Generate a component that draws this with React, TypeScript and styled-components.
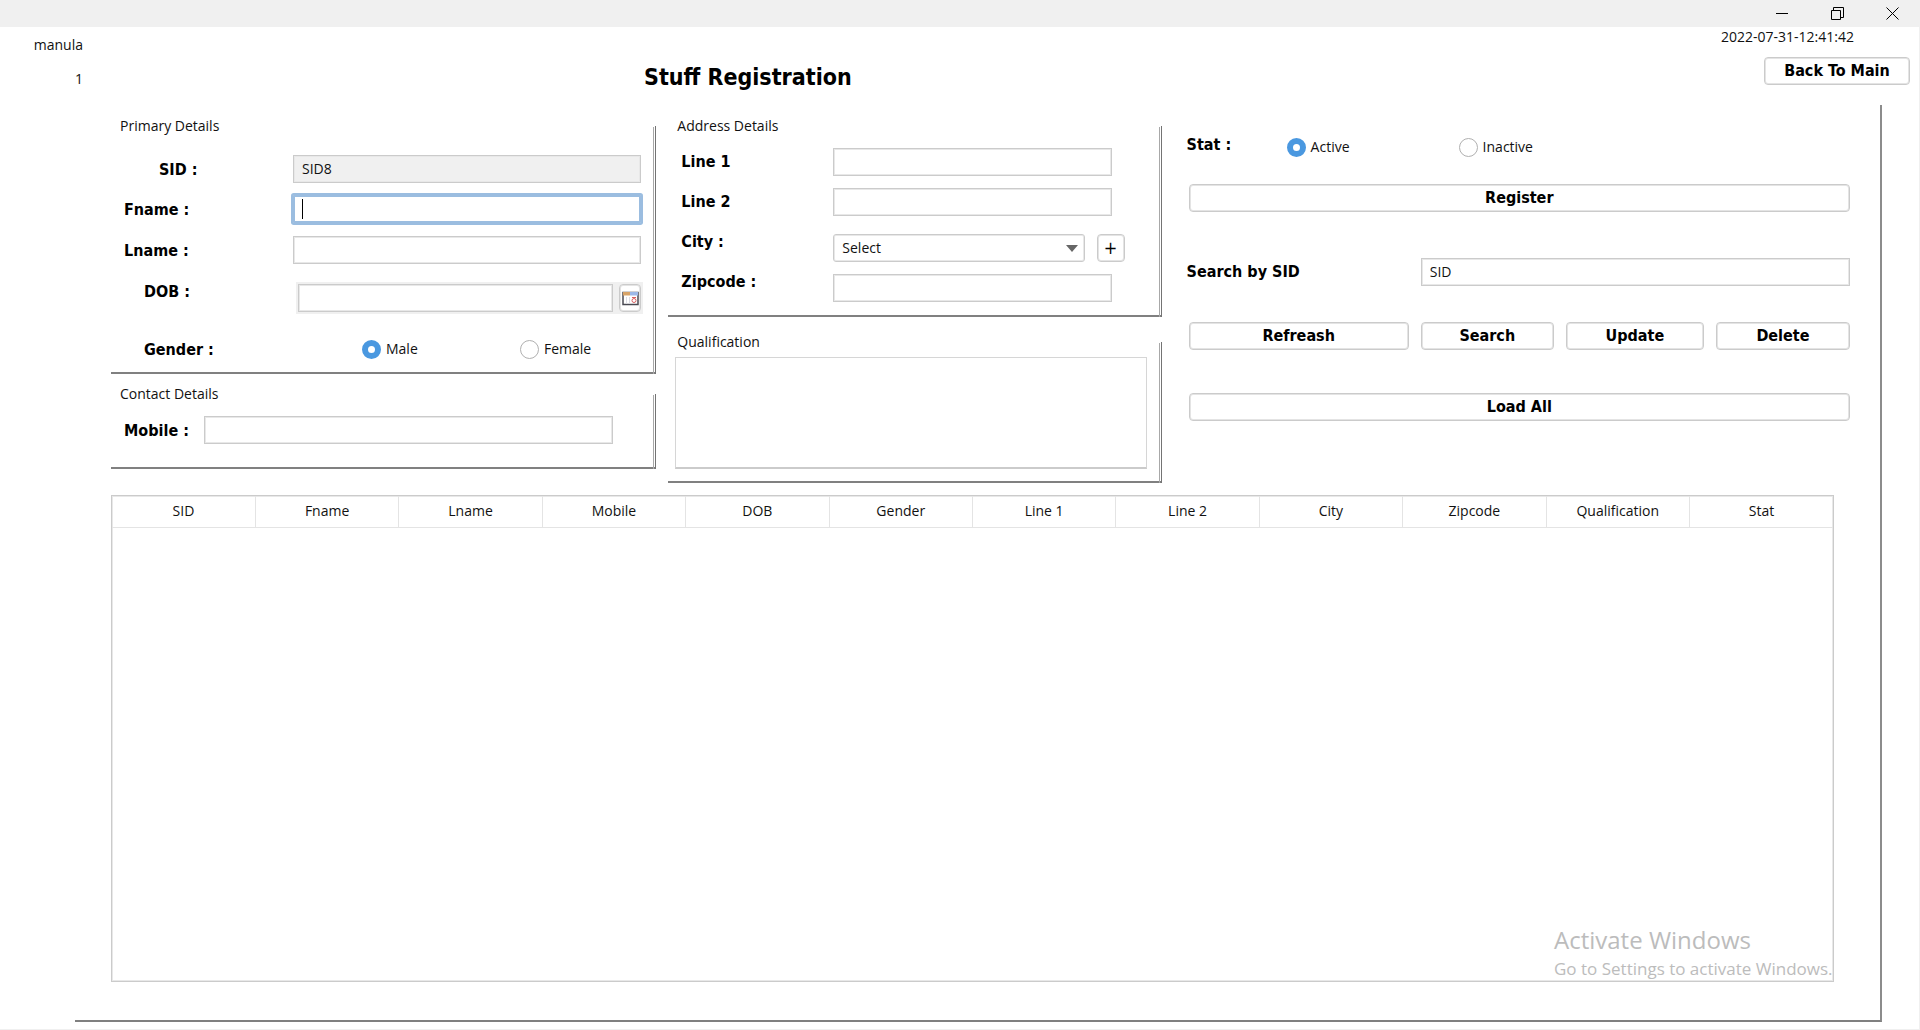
import React from "react";
import styled, { createGlobalStyle, css } from "styled-components";

const GlobalStyle = createGlobalStyle`
  *, *::before, *::after { box-sizing: border-box; }
  body {
    margin: 0;
    background: #fff;
    color: #111;
    font-family: "Open Sans", "Noto Sans", sans-serif;
    font-size: 14px;
    line-height: 20px;
  }
  button, input, select, textarea { font: inherit; color: inherit; }
`;

const boldFont = css`
  font-family: "DejaVu Sans Condensed", "DejaVu Sans", sans-serif;
  font-weight: 700;
  font-size: 16px;
  line-height: 20px;
  color: #000;
`;

const line = "#cbcbcb";

const Window = styled.div`
  position: relative;
  min-height: 100vh;
  display: flex;
  flex-direction: column;
  border-right: 1px solid #f0f0f0;
  border-bottom: 1px solid #f0f0f0;
`;

const TitleBar = styled.div`
  height: 27px;
  margin-right: -1px;
  background: #f0f0f0;
  display: flex;
  justify-content: flex-end;
`;

const WindowButton = styled.button`
  width: 55px;
  border: 0;
  padding: 0;
  background: transparent;
  display: grid;
  place-items: center;
  svg { width: 13px; height: 13px; fill: none; stroke: #000; }
`;

const Header = styled.header`
  display: grid;
  grid-template-columns: 83px 1fr 1fr;
  height: 78px;
`;

const User = styled.div`
  display: flex;
  flex-direction: column;
  align-items: flex-end;
  gap: 14px;
  padding-top: 8px;
`;

const Title = styled.h1`
  ${boldFont}
  font-size: 23px;
  line-height: 28px;
  margin: 36px 0 0;
  padding-left: 561px;
  white-space: nowrap;
`;

const HeaderRight = styled.div`
  display: flex;
  flex-direction: column;
  align-items: flex-end;
  gap: 10px;
  padding-right: 9px;
`;

const Clock = styled.time`
  padding-right: 56px;
`;

const Button = styled.button<{ $width?: number }>`
  ${boldFont}
  height: 28px;
  width: ${(p) => (p.$width ? `${p.$width}px` : "100%")};
  padding: 0;
  background: #fff;
  border: 1px solid ${line};
  box-shadow: inset 0 0 0 1px #e4e4e4;
  border-radius: 4px;
  white-space: nowrap;
`;

const PlusButton = styled(Button)`
  font-weight: 400;
  font-size: 18px;
`;

const Frame = styled.main`
  flex: 1;
  display: flex;
  flex-direction: column;
  margin: 0 37px 7px 75px;
  padding: 11px 46px 38px 36px;
  border-right: 2px solid #8c8c8c;
  border-bottom: 2px solid #808080;
`;

const Columns = styled.div`
  display: grid;
  grid-template-columns: 545fr 493fr 660fr;
  column-gap: 12px;
  height: 379px;
`;

const Column = styled.div`
  display: flex;
  flex-direction: column;
`;

const Group = styled.fieldset<{ $height: number; $gap?: number }>`
  margin: ${(p) => p.$gap ?? 0}px 0 0;
  padding: 0;
  border: 0;
  min-width: 0;
  height: ${(p) => p.$height}px;
  background:
    linear-gradient(#747474, #747474) right 0 top 0 / 1px 100% no-repeat,
    linear-gradient(#a8a8a8, #a8a8a8) right 2px top 1px / 1px 100% no-repeat,
    linear-gradient(#808080, #808080) left bottom / 100% 2px no-repeat;
`;

const Legend = styled.legend`
  padding: 0 0 0 9px;
  height: 20px;
`;

const Rows = styled.div<{ $top: number }>`
  padding: ${(p) => p.$top}px 15px 0 13px;
`;

const Row = styled.div<{ $height: number; $right?: number }>`
  display: flex;
  align-items: center;
  height: ${(p) => p.$height}px;
  padding-right: ${(p) => p.$right ?? 0}px;
`;

const RowLabel = styled.label<{ $indent?: number; $top?: boolean; $width?: number }>`
  ${boldFont}
  flex: none;
  width: ${(p) => p.$width ?? 169}px;
  padding: 2px 0 0 ${(p) => p.$indent ?? 0}px;
  ${(p) => p.$top && css`align-self: flex-start; line-height: 38px;`}
`;

const TextInput = styled.input<{ $active?: boolean }>`
  flex: 1;
  width: 100%;
  min-width: 0;
  height: 28px;
  padding: 0 8px 2px;
  border: 1px solid ${line};
  box-shadow: inset 0 0 0 1px #e8e8e8;
  border-radius: 0;
  background: #fff;
  outline: none;
  &:disabled { background: #f0f0f0; color: #111; }
  ${(p) =>
    p.$active &&
    css`
      border-color: #9bbde0;
      box-shadow: 0 0 0 2px #9bbde0, inset 0 0 0 1px #9bbde0;
      border-radius: 1px;
      background: linear-gradient(#000, #000) 8px center / 1px 20px no-repeat #fff;
    `}
`;

const DatePicker = styled.div`
  flex: 1;
  display: flex;
  gap: 6px;
  margin: 0 -2px 0 3px;
  padding: 2px;
  background: #f0f0f0;
`;

const CalendarButton = styled(Button)`
  flex: none;
  display: grid;
  place-items: center;
`;

const Choice = styled.label<{ $width: number }>`
  display: flex;
  align-items: center;
  gap: 5px;
  width: ${(p) => p.$width}px;
`;

const Radio = styled.input.attrs({ type: "radio" })`
  appearance: none;
  width: 19px;
  height: 19px;
  margin: 0;
  border: 1px solid #b0b0b0;
  border-radius: 50%;
  background: #fff;
  &:checked {
    border: 6px solid #4a98e0;
  }
`;

const Address = styled.div`
  display: flex;
  padding: 0 50px 0 13px;
`;

const AddressLabels = styled.div`
  display: flex;
  flex-direction: column;
  flex: none;
  width: 152px;
  padding-top: 6px;
`;

const AddressLabel = styled.label`
  ${boldFont}
  line-height: 40px;
`;

const AddressFields = styled.div`
  flex: 1;
  display: flex;
  flex-direction: column;
  gap: 12px;
  padding-top: 12px;
`;

const FieldLine = styled.div`
  display: flex;
  height: 28px;
`;

const CityLine = styled(FieldLine)`
  gap: 12px;
  margin: 6px -13px 0 0;
`;

const SelectBox = styled.div`
  position: relative;
  flex: 1;
  svg {
    position: absolute;
    right: 7px;
    top: 11px;
    pointer-events: none;
  }
`;

const Select = styled.select`
  appearance: none;
  width: 100%;
  height: 28px;
  padding: 0 8px;
  background: #fff;
  border: 1px solid ${line};
  box-shadow: inset 0 0 0 1px #e8e8e8;
  border-radius: 3px;
`;

const Notes = styled.textarea`
  display: block;
  width: calc(100% - 22px);
  height: 112px;
  margin: 5px 0 0 7px;
  padding: 4px 8px;
  border: 1px solid #d6d6d6;
  border-bottom: 2px solid ${line};
  resize: none;
  outline: none;
`;

const Side = styled.div`
  display: grid;
  grid-template-columns: 220fr 133fr 138fr 134fr;
  grid-template-rows: 51px 74px 64px 71px 28px;
  column-gap: 12px;
  align-items: start;
  align-content: start;
  padding: 17px 0 0 15px;
  margin-right: -16px;
`;

const Wide = styled.div`
  grid-column: 1 / -1;
`;

const SearchField = styled.div`
  grid-column: 2 / -1;
  display: flex;
`;

const SideLabel = styled.label`
  ${boldFont}
  line-height: 28px;
  margin-left: -2px;
`;

const StatLine = styled.div`
  grid-column: 1 / -1;
  display: flex;
  align-items: center;
  height: 28px;
`;

const StatLabel = styled.span`
  ${boldFont}
  width: 100px;
  padding-bottom: 4px;
  margin-left: -2px;
`;

const TableBox = styled.div`
  flex: 1;
  min-height: 200px;
  border: 1px solid ${line};
  box-shadow: inset 0 0 0 1px #e8e8e8;
`;

const Table = styled.table`
  width: 100%;
  table-layout: fixed;
  border-collapse: collapse;
`;

const HeadCell = styled.th`
  height: 31px;
  padding: 0;
  font-weight: 400;
  text-align: center;
  border-bottom: 1px solid #e4e4e4;
  &:not(:last-child) { border-right: 1px solid #e4e4e4; }
`;

const Watermark = styled.aside`
  position: absolute;
  left: calc(100% - 365px);
  bottom: 48px;
  color: #bcbcbc;
  font-size: 17px;
  line-height: 24px;
  white-space: nowrap;
  pointer-events: none;
  strong {
    display: block;
    font-weight: 400;
    font-size: 24px;
    line-height: 34px;
  }
`;

const columns = [
  "SID", "Fname", "Lname", "Mobile", "DOB", "Gender",
  "Line 1", "Line 2", "City", "Zipcode", "Qualification", "Stat",
];

function CalendarIcon() {
  return (
    <svg width="17" height="15" viewBox="0 0 17 15" aria-hidden="true">
      <rect x="1" y="1.500" width="15" height="12" fill="#fff" stroke="#4a4a52" strokeWidth="1.500" />
      <path d="M1 1h7v3.500H1z" fill="#d8a468" />
      <path d="M8 1h8v3.500H8z" fill="#9cb8e8" />
      <path d="M4.500 6v6.500M7.500 6v6.500" stroke="#dcdce4" />
      <circle cx="12" cy="9.500" r="2" fill="#fff" stroke="#d86060" />
      <path d="M10 6.500h4" stroke="#d86060" />
    </svg>
  );
}

export default function App() {
  return (
    <>
      <GlobalStyle />
      <Window>
        <TitleBar>
          <WindowButton aria-label="Minimize">
            <svg viewBox="0 0 13 13"><path d="M0 6.500h12" /></svg>
          </WindowButton>
          <WindowButton aria-label="Restore">
            <svg viewBox="0 0 13 13"><path d="M.5 3.500h9v9h-9zM2.500 3.500v-3h10v10h-3" /></svg>
          </WindowButton>
          <WindowButton aria-label="Close">
            <svg viewBox="0 0 13 13"><path d="M.5.5l12 12M12.500.5l-12 12" /></svg>
          </WindowButton>
        </TitleBar>

        <Header>
          <User>
            <span>manula</span>
            <span>1</span>
          </User>
          <Title>Stuff Registration</Title>
          <HeaderRight>
            <Clock>2022-07-31-12:41:42</Clock>
            <Button type="button" $width={146}>Back To Main</Button>
          </HeaderRight>
        </Header>

        <Frame>
          <Columns>
            <Column>
              <Group $height={258}>
                <Legend>Primary Details</Legend>
                <Rows $top={13}>
                  <Row $height={40}>
                    <RowLabel htmlFor="sid" $indent={35}>SID :</RowLabel>
                    <TextInput id="sid" defaultValue="SID8" disabled />
                  </Row>
                  <Row $height={40}>
                    <RowLabel htmlFor="fname">Fname :</RowLabel>
                    <TextInput id="fname" $active />
                  </Row>
                  <Row $height={42}>
                    <RowLabel htmlFor="lname">Lname :</RowLabel>
                    <TextInput id="lname" />
                  </Row>
                  <Row $height={54}>
                    <RowLabel htmlFor="dob" $indent={20} $top>DOB :</RowLabel>
                    <DatePicker>
                      <TextInput id="dob" />
                      <CalendarButton type="button" $width={22} aria-label="Pick a date">
                        <CalendarIcon />
                      </CalendarButton>
                    </DatePicker>
                  </Row>
                  <Row $height={48} role="radiogroup" aria-label="Gender">
                    <RowLabel as="span" $indent={20} $width={238}>Gender :</RowLabel>
                    <Choice $width={158}>
                      <Radio name="gender" defaultChecked />
                      Male
                    </Choice>
                    <Choice $width={100}>
                      <Radio name="gender" />
                      Female
                    </Choice>
                  </Row>
                </Rows>
              </Group>
              <Group $height={85} $gap={10}>
                <Legend>Contact Details</Legend>
                <Rows $top={6}>
                  <Row $height={40} $right={28}>
                    <RowLabel htmlFor="mobile" $width={80}>Mobile :</RowLabel>
                    <TextInput id="mobile" />
                  </Row>
                </Rows>
              </Group>
            </Column>

            <Column>
              <Group $height={201}>
                <Legend>Address Details</Legend>
                <Address>
                  <AddressLabels>
                    <AddressLabel htmlFor="line1">Line 1</AddressLabel>
                    <AddressLabel htmlFor="line2">Line 2</AddressLabel>
                    <AddressLabel htmlFor="city">City :</AddressLabel>
                    <AddressLabel htmlFor="zip">Zipcode :</AddressLabel>
                  </AddressLabels>
                  <AddressFields>
                    <FieldLine><TextInput id="line1" /></FieldLine>
                    <FieldLine><TextInput id="line2" /></FieldLine>
                    <CityLine>
                      <SelectBox>
                        <Select id="city"><option>Select</option></Select>
                        <svg width="12" height="7" viewBox="0 0 12 7"><path d="M0 0h12L6 7z" fill="#666" /></svg>
                      </SelectBox>
                      <PlusButton type="button" $width={28} aria-label="Add city">+</PlusButton>
                    </CityLine>
                    <FieldLine><TextInput id="zip" /></FieldLine>
                  </AddressFields>
                </Address>
              </Group>
              <Group $height={151} $gap={15}>
                <Legend>Qualification</Legend>
                <Notes aria-label="Qualification" />
              </Group>
            </Column>

            <Side>
              <StatLine role="radiogroup" aria-label="Stat">
                <StatLabel>Stat :</StatLabel>
                <Choice $width={172}>
                  <Radio name="stat" defaultChecked />
                  Active
                </Choice>
                <Choice $width={120}>
                  <Radio name="stat" />
                  Inactive
                </Choice>
              </StatLine>
              <Wide><Button type="button">Register</Button></Wide>
              <SideLabel htmlFor="search">Search by SID</SideLabel>
              <SearchField><TextInput id="search" defaultValue="SID" /></SearchField>
              <Button type="button">Refreash</Button>
              <Button type="button">Search</Button>
              <Button type="button">Update</Button>
              <Button type="button">Delete</Button>
              <Wide><Button type="button">Load All</Button></Wide>
            </Side>
          </Columns>

          <TableBox>
            <Table>
              <thead>
                <tr>{columns.map((c) => <HeadCell key={c} scope="col">{c}</HeadCell>)}</tr>
              </thead>
              <tbody />
            </Table>
          </TableBox>
        </Frame>

        <Watermark>
          <strong>Activate Windows</strong>
          Go to Settings to activate Windows.
        </Watermark>
      </Window>
    </>
  );
}
